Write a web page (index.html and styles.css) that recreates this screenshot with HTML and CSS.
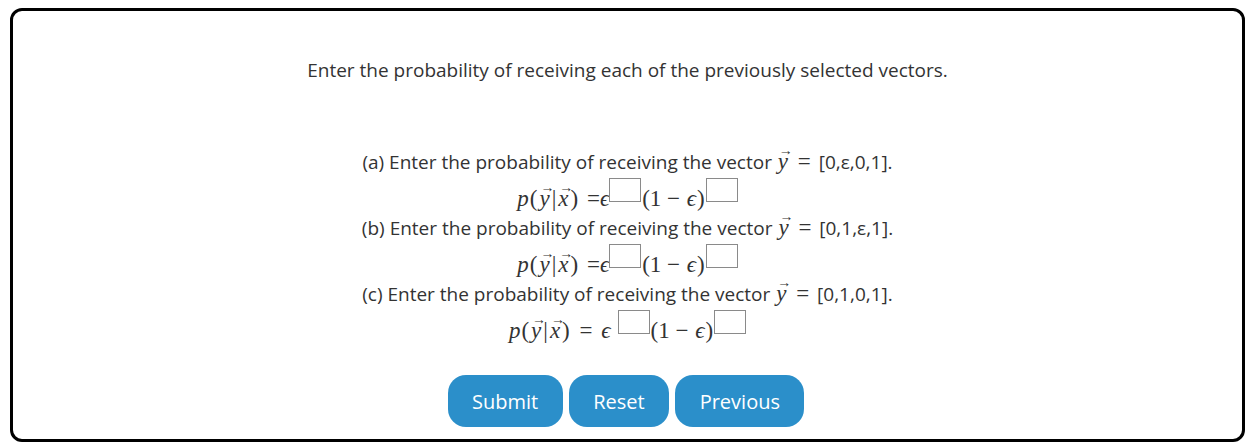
FILE: index.html
```html
<!DOCTYPE html>
<html>
<head>
<meta charset="utf-8">
<link rel="stylesheet" href="styles.css">
</head>
<body>
<div class="card">
  <p class="intro">Enter the probability of receiving each of the previously selected vectors.</p>
  <div class="parts">
    <div class="q">(a) Enter the probability of receiving the vector <span class="m"><span class="vec">y</span> <span class="eq">=</span></span> [0,ε,0,1].</div>
    <div class="math"><span class="mi">p</span><span class="mo">(</span><span class="vec">y</span><span class="mo">|</span><span class="vec">x</span><span class="mo">)</span> <span class="eq tight">=</span><span class="mi eps">ϵ</span><span class="box"></span><span class="mo">(1 − </span><span class="mi">ϵ</span><span class="mo">)</span><span class="box"></span></div>
    <div class="q">(b) Enter the probability of receiving the vector <span class="m"><span class="vec">y</span> <span class="eq">=</span></span> [0,1,ε,1].</div>
    <div class="math"><span class="mi">p</span><span class="mo">(</span><span class="vec">y</span><span class="mo">|</span><span class="vec">x</span><span class="mo">)</span> <span class="eq tight">=</span><span class="mi eps">ϵ</span><span class="box"></span><span class="mo">(1 − </span><span class="mi">ϵ</span><span class="mo">)</span><span class="box"></span></div>
    <div class="q">(c) Enter the probability of receiving the vector <span class="m"><span class="vec">y</span> <span class="eq">=</span></span> [0,1,0,1].</div>
    <div class="math"><span class="mi">p</span><span class="mo">(</span><span class="vec">y</span><span class="mo">|</span><span class="vec">x</span><span class="mo">)</span> <span class="eq">=</span> <span class="mi eps wide">ϵ</span><span class="box"></span><span class="mo">(1 − </span><span class="mi">ϵ</span><span class="mo">)</span><span class="box"></span></div>
  </div>
  <div class="buttons">
    <button class="btn btn-submit">Submit</button>
    <button class="btn btn-reset">Reset</button>
    <button class="btn btn-prev">Previous</button>
  </div>
</div>
</body>
</html>
```

FILE: styles.css
```css
html, body {
  background: #ffffff;
}
body {
  margin: 8px 12px 0 10px;
  font-family: "Open Sans", "Noto Sans", sans-serif;
  color: #333333;
}
.card {
  box-sizing: border-box;
  height: 434px;
  border: 3px solid #000000;
  border-radius: 12px;
  padding-top: 46px;
  text-align: center;
}
.intro {
  margin: 0;
  font-size: 19px;
  line-height: 27px;
}
.parts {
  margin-top: 61px;
}
.q {
  font-size: 19px;
  line-height: 33px;
  height: 33px;
}
.math {
  font-family: "Liberation Serif", "DejaVu Serif", serif;
  font-size: 23px;
  line-height: 33px;
  height: 33px;
  color: #333333;
}
.m {
  font-family: "Liberation Serif", "DejaVu Serif", serif;
  font-size: 23px;
}
.mi, .vec {
  font-style: italic;
}
.vec {
  position: relative;
  display: inline-block;
  font-style: italic;
  padding: 0 1px;
}
.vec::before {
  content: "→";
  position: absolute;
  left: 2px;
  top: -11px;
  font-style: normal;
  font-size: 14px;
}
.eq {
  margin: 0 3px;
}
.eq.tight {
  margin: 0 0 0 2px;
}
.mo {
  margin: 0 1px;
}
.box {
  display: inline-block;
  width: 32px;
  height: 24px;
  border: 1px solid #8a8a8a;
  vertical-align: 4px;
  box-sizing: border-box;
  background: #ffffff;
}
.eps.wide {
  margin-right: 7px;
}
.buttons {
  margin-top: 32px;
  display: flex;
  justify-content: center;
  gap: 6px;
  padding-right: 3px;
}
.btn {
  font-family: "Open Sans", "Noto Sans", sans-serif;
  font-size: 20px;
  color: #ffffff;
  background: #2b8fca;
  border: none;
  border-radius: 18px;
  height: 52px;
  padding: 0 24.5px;
  cursor: pointer;
}
```
